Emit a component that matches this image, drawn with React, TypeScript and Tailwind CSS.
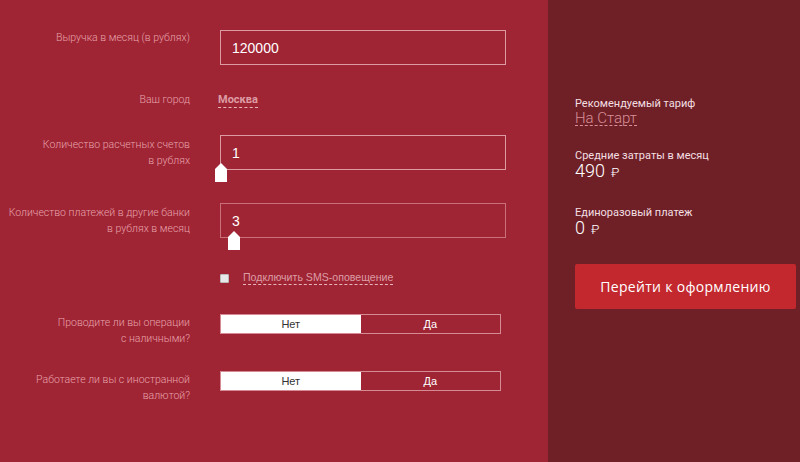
import React from "react";

const Thumb = ({ left }: { left: number }) => (
  <svg
    className="absolute"
    style={{ left, top: 27 }}
    width="12"
    height="19"
    viewBox="0 0 12 19"
  >
    <path d="M6 0 L12 6 L12 19 L0 19 L0 6 Z" fill="#ffffff" />
  </svg>
);

const Toggle = () => (
  <div className="flex w-[281px] h-[20px] border border-[#d68a93] text-[11px] font-['Liberation_Sans',sans-serif]">
    <div className="w-1/2 bg-white text-[#333] flex items-center justify-center">Нет</div>
    <div className="w-1/2 text-white flex items-center justify-center">Да</div>
  </div>
);

const inputCls =
  "relative ml-[30px] w-[286px] h-[35px] border flex items-center pl-[11px] text-white text-[14px] font-['Liberation_Sans',sans-serif]";

export default function App() {
  return (
    <div className="flex w-[800px] h-[462px] overflow-hidden font-['Roboto',sans-serif]">
      <div className="w-[548px] h-full bg-[#9f2535] text-[10.5px] leading-4 text-[#e8a3ab] font-light">
        {/* row 1 */}
        <div className="flex mt-[30px]">
          <div className="w-[190px] text-right whitespace-nowrap">Выручка в месяц (в рублях)</div>
          <div className={inputCls + " border-[#dc9aa2]"}>120000</div>
        </div>
        {/* row 2 */}
        <div className="flex mt-[27px] items-center">
          <div className="w-[190px] text-right whitespace-nowrap">Ваш город</div>
          <div className="ml-[28px] text-[11px] text-[#dd9ca4] font-bold border-b border-dashed border-[#e8b5bb] leading-[14px]">
            Москва
          </div>
        </div>
        {/* row 3 */}
        <div className="flex mt-[27px]">
          <div className="w-[190px] text-right mt-[2px] whitespace-nowrap">
            Количество расчетных счетов
            <br />в рублях
          </div>
          <div className={inputCls + " border-[#dc9aa2]"}>
            1
            <Thumb left={-6} />
          </div>
        </div>
        {/* row 4 */}
        <div className="flex mt-[33px]">
          <div className="w-[190px] text-right mt-[2px] whitespace-nowrap">
            Количество платежей в другие банки
            <br />в рублях в месяц
          </div>
          <div className={inputCls + " border-[#c9707b]"}>
            3
            <Thumb left={7} />
          </div>
        </div>
        {/* row 5 */}
        <div className="flex mt-[33px] items-center">
          <div className="w-[190px]" />
          <div className="ml-[30px] w-[9px] h-[9px] bg-[#e8e8e8] border border-[#bbb] rounded-[1px]" />
          <div className="ml-[14px] text-[#dd9ca4] text-[10.6px] font-normal font-['Liberation_Sans',sans-serif] border-b border-dashed border-[#e8b5bb] leading-[13px]">
            Подключить SMS-оповещение
          </div>
        </div>
        {/* row 6 */}
        <div className="flex mt-[29px]">
          <div className="w-[190px] text-right mt-[1px] whitespace-nowrap">
            Проводите ли вы операции
            <br />с наличными?
          </div>
          <div className="ml-[30px]">
            <Toggle />
          </div>
        </div>
        {/* row 7 */}
        <div className="flex mt-[24px]">
          <div className="w-[190px] text-right mt-[1px] whitespace-nowrap">
            Работаете ли вы с иностранной
            <br />валютой?
          </div>
          <div className="ml-[30px]">
            <Toggle />
          </div>
        </div>
      </div>
      <div className="flex-1 h-full bg-[#6f2027] pl-[27px] pt-[97px]">
        <div className="text-[11px] leading-[14px] text-[#f3dfe1]">Рекомендуемый тариф</div>
        <div className="w-fit text-[15px] leading-[14px] font-light text-[#d88f98] border-b border-dashed border-[#d88f98]">
          На Старт
        </div>
        <div className="mt-[23px] text-[11px] leading-[14px] text-[#f3dfe1]">Средние затраты в месяц</div>
        <div className="text-[18px] leading-[16px] font-light text-white">
          490<span className="ml-[6px] text-[13px]">₽</span>
        </div>
        <div className="mt-[25px] text-[11px] leading-[14px] text-[#f3dfe1]">Единоразовый платеж</div>
        <div className="text-[18px] leading-[16px] font-light text-white">
          0<span className="ml-[6px] text-[13px]">₽</span>
        </div>
        <button className="block mt-[26px] w-[221px] h-[45px] bg-[#c3282e] rounded-[2px] text-white text-[14px] tracking-[0.3px] font-['Open_Sans',sans-serif]">
          Перейти к оформлению
        </button>
      </div>
    </div>
  );
}
